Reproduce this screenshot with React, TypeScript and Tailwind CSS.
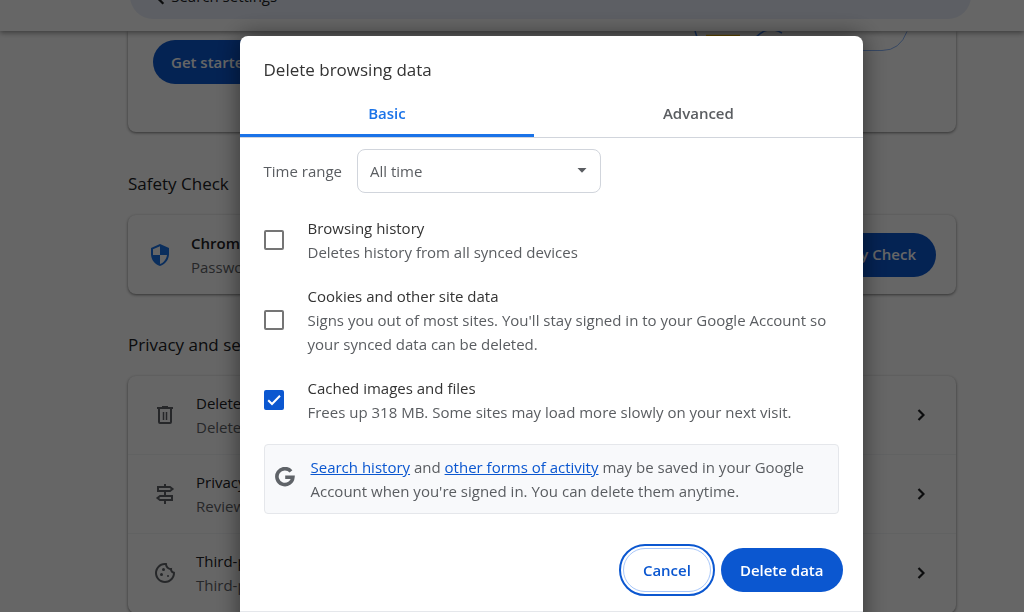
import { useState } from "react";
import type { ReactNode } from "react";
import { MdSecurity, MdOutlineCookie } from "react-icons/md";

interface ClearOption {
  id: string;
  title: string;
  description: string;
  checked: boolean;
}

const OPTIONS: ClearOption[] = [
  {
    id: "history",
    title: "Browsing history",
    description: "Deletes history from all synced devices",
    checked: false,
  },
  {
    id: "cookies",
    title: "Cookies and other site data",
    description:
      "Signs you out of most sites. You'll stay signed in to your Google Account so your synced data can be deleted.",
    checked: false,
  },
  {
    id: "cache",
    title: "Cached images and files",
    description: "Frees up 318 MB. Some sites may load more slowly on your next visit.",
    checked: true,
  },
];

function SearchIcon() {
  return (
    <svg viewBox="0 0 24 24" className="size-6" fill="none" stroke="currentColor" strokeWidth="2.4" aria-hidden="true">
      <circle cx="9.500" cy="9.500" r="5.500" />
      <path d="M13.500 13.500l6.500 6.500" />
    </svg>
  );
}

function TrashIcon() {
  return (
    <svg viewBox="0 0 24 24" className="size-6" fill="none" stroke="currentColor" strokeWidth="2" aria-hidden="true">
      <path d="M4 5h16M9 4h6M6 6v13q0 1 1 1h10q1 0 1-1V6" />
      <path d="M10.500 9v8M13.500 9v8" strokeWidth="1.500" />
    </svg>
  );
}

function SignpostIcon() {
  return (
    <svg viewBox="0 0 24 24" className="size-6" fill="none" stroke="currentColor" strokeWidth="2" aria-hidden="true">
      <path d="M12 2v3M12 9v5M12 18v4M5 5h12l2.500 2-2.500 2H5zM19 14H7l-2.500 2 2.500 2h12z" />
    </svg>
  );
}

function ChevronIcon() {
  return (
    <svg viewBox="0 0 8 12" className="h-3 w-2" fill="none" stroke="currentColor" strokeWidth="2.2" aria-hidden="true">
      <path d="M1.500 1l5 5-5 5" />
    </svg>
  );
}

function CheckIcon() {
  return (
    <svg
      viewBox="0 0 20 20"
      className="pointer-events-none col-start-1 row-start-1 size-5"
      fill="none"
      stroke="white"
      strokeWidth="2"
      aria-hidden="true"
    >
      <path d="M4.200 10.200l3.800 3.800 8-8.300" />
    </svg>
  );
}

function GoogleIcon() {
  return (
    <svg viewBox="0 0 20 20" className="mb-1 size-5 shrink-0" fill="none" stroke="#5f6368" strokeWidth="3.6" aria-hidden="true">
      <path d="M16 4.400A8 8 0 1 0 17.900 10.200H10.200" />
    </svg>
  );
}

function Illustration() {
  return (
    <svg viewBox="0 0 230 24" className="h-6 w-[230px] shrink-0" fill="none" aria-hidden="true">
      <path d="M10 0l2 6" stroke="#4285f4" strokeWidth="1.5" />
      <path d="M21 4.500h34" stroke="#fbbc04" strokeWidth="1.5" />
      <path d="M71 6q12-12 26-4" stroke="#4285f4" strokeWidth="1.5" />
      <path d="M120 19.500h77q18 0 25-19" stroke="#8ab4f8" />
    </svg>
  );
}

interface SettingsRowProps {
  icon: ReactNode;
  title: string;
  description: string;
}

function SettingsRow({ icon, title, description }: SettingsRowProps) {
  return (
    <button className="flex h-[79px] w-full items-center border-b border-gray-100 pr-[31px] pl-[25px] text-left">
      <span className="flex w-[43px] text-[#5f6368]">{icon}</span>
      <span className="flex-1 leading-6">
        <span className="block">{title}</span>
        <span className="block text-[#5f6368]">{description}</span>
      </span>
      <ChevronIcon />
    </button>
  );
}

function SettingsPage() {
  return (
    <div className="text-[15px] text-[#202124]">
      <header className="relative z-10 flex h-[31px] items-end bg-white pr-[53px] pb-3 pl-[130px] shadow-[0_2px_5px_rgba(0,0,0,0.4)]">
        <label className="flex h-[46px] w-full items-center gap-1 rounded-full bg-[#e9eef9] pl-3.5 text-[#202124]">
          <SearchIcon />
          <input
            type="search"
            aria-label="Search settings"
            placeholder="Search settings"
            className="w-full bg-transparent outline-none placeholder:text-[#202124]"
          />
        </label>
      </header>
      <main className="pr-[68px] pl-[128px]">
        <section className="flex h-[101px] items-start justify-between rounded-b-lg pr-[41px] pl-[25px] shadow-[0_1px_3px_rgba(0,0,0,0.5)]">
          <button className="mt-[9px] h-11 rounded-full bg-[#0b57d0] px-[18px] font-semibold text-white">
            Get started
          </button>
          <Illustration />
        </section>
        <h2 className="mt-10 mb-[19px] text-[17px] leading-6">Safety Check</h2>
        <section className="flex h-[79px] items-center rounded-lg px-5 shadow-[0_1px_3px_rgba(0,0,0,0.5)]">
          <MdSecurity className="size-6 text-[#1a73e8]" />
          <div className="ml-[19px] flex-1 leading-6">
            <h3 className="font-semibold">Chrome can help keep you safe</h3>
            <p className="text-[#5f6368]">Passwords, extensions, and more</p>
          </div>
          <button className="h-11 rounded-full bg-[#0b57d0] px-5 font-semibold text-white">
            Go to Safety Check
          </button>
        </section>
        <h2 className="mt-[39px] mb-[19px] text-[17px] leading-6">Privacy and security</h2>
        <section className="rounded-lg shadow-[0_1px_3px_rgba(0,0,0,0.5)]">
          <SettingsRow
            icon={<TrashIcon />}
            title="Delete browsing data"
            description="Delete history, cookies, cache, and more"
          />
          <SettingsRow
            icon={<SignpostIcon />}
            title="Privacy Guide"
            description="Review key privacy and security controls"
          />
          <SettingsRow
            icon={<MdOutlineCookie className="size-6" />}
            title="Third-party cookies"
            description="Third-party cookies are blocked in Incognito mode"
          />
        </section>
      </main>
    </div>
  );
}

function OptionRow({ option }: { option: ClearOption }) {
  const [checked, setChecked] = useState(option.checked);

  return (
    <label htmlFor={option.id} className="flex items-center gap-6 leading-6">
      <span className="grid size-5 shrink-0 place-items-center">
        <input
          id={option.id}
          type="checkbox"
          checked={checked}
          onChange={() => setChecked(!checked)}
          className="col-start-1 row-start-1 size-5 appearance-none rounded-xs border-2 border-[#757575] checked:border-[#0b57d0] checked:bg-[#0b57d0]"
        />
        {checked && <CheckIcon />}
      </span>
      <span>
        <span className="block text-[#333]">{option.title}</span>
        <span className="block">{option.description}</span>
      </span>
    </label>
  );
}

function DeleteDialog() {
  const [tab, setTab] = useState("Basic");

  return (
    <div
      role="dialog"
      aria-labelledby="dialog-title"
      className="w-full max-w-[623px] rounded-t-lg bg-white text-[15px] text-[#5a5d61] shadow-[0_0_24px_rgba(0,0,0,0.5)]"
    >
      <h1 id="dialog-title" className="px-6 pt-5 text-[17px] leading-7 text-[#333]">
        Delete browsing data
      </h1>
      <div role="tablist" className="mt-1.5 flex h-12 border-b border-gray-300">
        {["Basic", "Advanced"].map((name) => (
          <button
            key={name}
            role="tab"
            aria-selected={tab === name}
            onClick={() => setTab(name)}
            className={
              tab === name
                ? "flex-auto border-b-3 border-[#1a73e8] pt-[3px] font-semibold text-[#1a73e8]"
                : "flex-auto font-semibold"
            }
          >
            {name}
          </button>
        ))}
      </div>
      <div className="flex items-center gap-[15px] px-6 pt-[11px]">
        <label htmlFor="time-range">Time range</label>
        <div className="grid w-[244px] items-center">
          <select
            id="time-range"
            defaultValue="All time"
            className="col-start-1 row-start-1 h-11 appearance-none rounded-lg border border-gray-300 px-3 text-[15px]"
          >
            <option>Last hour</option>
            <option>Last 24 hours</option>
            <option>All time</option>
          </select>
          <svg
            viewBox="0 0 10 5"
            className="pointer-events-none col-start-1 row-start-1 mr-3.5 mb-0.5 h-[5px] w-2.5 justify-self-end"
            fill="currentColor"
            aria-hidden="true"
          >
            <path d="M0.500 0h9L5 4.800z" />
          </svg>
        </div>
      </div>
      <div className="flex flex-col gap-5 px-6 pt-[23px]">
        {OPTIONS.map((option) => (
          <OptionRow key={option.id} option={option} />
        ))}
        <div className="flex items-center gap-4 rounded-sm border border-gray-200 bg-[#f8f9fb] py-2.5 pr-5 pl-2.5 leading-6">
          <GoogleIcon />
          <p>
            <a href="#search-history" className="text-[#0b57d0] underline">Search history</a> and{" "}
            <a href="#activity" className="text-[#0b57d0] underline">other forms of activity</a> may be saved in
            your Google Account when you're signed in. You can delete them anytime.
          </p>
        </div>
      </div>
      <div className="mt-[34px] flex justify-end gap-2.5 px-5 pb-[19px] font-semibold">
        <button className="h-11 rounded-full border border-[#a8c7fa] px-[19px] text-[#0b57d0] outline-2 outline-offset-2 outline-[#0b57d0]">
          Cancel
        </button>
        <button className="h-11 rounded-full bg-[#0b57d0] px-[19px] text-white">Delete data</button>
      </div>
      <footer className="h-12 border-t border-gray-200" />
    </div>
  );
}

export default function App() {
  return (
    <div className="h-screen overflow-hidden bg-white font-['Open_Sans','Noto_Sans',sans-serif]">
      <SettingsPage />
      <div className="fixed inset-0 z-20 flex items-start justify-center overflow-hidden bg-black/60 pt-9 pl-[78px]">
        <DeleteDialog />
      </div>
    </div>
  );
}
